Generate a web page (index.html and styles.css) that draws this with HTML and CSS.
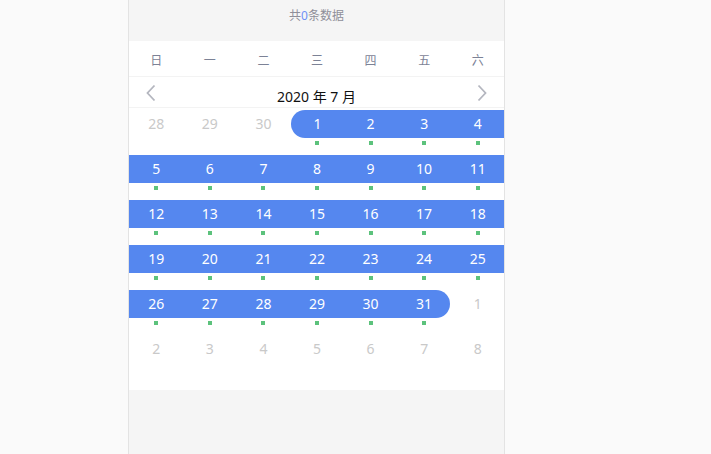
FILE: index.html
```html
<!DOCTYPE html>
<html lang="zh">
<head>
<meta charset="utf-8">
<link rel="stylesheet" href="styles.css">
</head>
<body>
<div class="phone">
  <div class="summary">共<span class="num">0</span>条数据</div>
  <div class="cal">
    <div class="weekdays">
      <span>日</span><span>一</span><span>二</span><span>三</span><span>四</span><span>五</span><span>六</span>
    </div>
    <div class="month">
      <svg class="arrow" width="10" height="18" viewBox="0 0 10 18"><path d="M8.5 1.5 L1.5 9 L8.5 16.5" fill="none" stroke="#b4b6bf" stroke-width="1.8"/></svg>
      <span class="title">2020 年 7 月</span>
      <svg class="arrow" width="10" height="18" viewBox="0 0 10 18"><path d="M1.5 1.5 L8.5 9 L1.5 16.5" fill="none" stroke="#b4b6bf" stroke-width="1.8"/></svg>
    </div>
    <div class="days">
      <div class="day other"><span class="bar">28</span></div>
      <div class="day other"><span class="bar">29</span></div>
      <div class="day other"><span class="bar">30</span></div>
      <div class="day sel start"><span class="bar">1</span><i></i></div>
      <div class="day sel"><span class="bar">2</span><i></i></div>
      <div class="day sel"><span class="bar">3</span><i></i></div>
      <div class="day sel"><span class="bar">4</span><i></i></div>
      <div class="day sel"><span class="bar">5</span><i></i></div>
      <div class="day sel"><span class="bar">6</span><i></i></div>
      <div class="day sel"><span class="bar">7</span><i></i></div>
      <div class="day sel"><span class="bar">8</span><i></i></div>
      <div class="day sel"><span class="bar">9</span><i></i></div>
      <div class="day sel"><span class="bar">10</span><i></i></div>
      <div class="day sel"><span class="bar">11</span><i></i></div>
      <div class="day sel"><span class="bar">12</span><i></i></div>
      <div class="day sel"><span class="bar">13</span><i></i></div>
      <div class="day sel"><span class="bar">14</span><i></i></div>
      <div class="day sel"><span class="bar">15</span><i></i></div>
      <div class="day sel"><span class="bar">16</span><i></i></div>
      <div class="day sel"><span class="bar">17</span><i></i></div>
      <div class="day sel"><span class="bar">18</span><i></i></div>
      <div class="day sel"><span class="bar">19</span><i></i></div>
      <div class="day sel"><span class="bar">20</span><i></i></div>
      <div class="day sel"><span class="bar">21</span><i></i></div>
      <div class="day sel"><span class="bar">22</span><i></i></div>
      <div class="day sel"><span class="bar">23</span><i></i></div>
      <div class="day sel"><span class="bar">24</span><i></i></div>
      <div class="day sel"><span class="bar">25</span><i></i></div>
      <div class="day sel"><span class="bar">26</span><i></i></div>
      <div class="day sel"><span class="bar">27</span><i></i></div>
      <div class="day sel"><span class="bar">28</span><i></i></div>
      <div class="day sel"><span class="bar">29</span><i></i></div>
      <div class="day sel"><span class="bar">30</span><i></i></div>
      <div class="day sel end"><span class="bar">31</span><i></i></div>
      <div class="day other"><span class="bar">1</span></div>
      <div class="day other"><span class="bar">2</span></div>
      <div class="day other"><span class="bar">3</span></div>
      <div class="day other"><span class="bar">4</span></div>
      <div class="day other"><span class="bar">5</span></div>
      <div class="day other"><span class="bar">6</span></div>
      <div class="day other"><span class="bar">7</span></div>
      <div class="day other"><span class="bar">8</span></div>
    </div>
  </div>
</div>
</body>
</html>
```

FILE: styles.css
```css
html, body {
  margin: 0;
  padding: 0;
  background: #fafafa;
  font-family: "Noto Sans", "Noto Sans CJK SC", sans-serif;
}
.phone {
  margin-left: 128px;
  width: 375px;
  height: 454px;
  background: #f5f5f5;
  border-left: 1px solid #e3e3e3;
  border-right: 1px solid #e3e3e3;
}
.summary {
  height: 41px;
  box-sizing: border-box;
  padding-top: 7px;
  text-align: center;
  font-size: 12px;
  line-height: 18px;
  color: #8f8f99;
}
.summary .num { color: #6f8ff5; }
.cal {
  background: #fff;
  padding-bottom: 12px;
}
.weekdays {
  display: grid;
  grid-template-columns: repeat(7, 1fr);
  height: 35px;
  align-items: center;
  border-bottom: 1px solid #f3f3f3;
  font-size: 12px;
  color: #7c8296;
  text-align: center;
}
.weekdays span { padding-top: 3px; padding-left: 1px; }
.month {
  height: 30px;
  display: flex;
  align-items: center;
  justify-content: space-between;
  padding: 0 17px;
  border-bottom: 1px solid #f3f3f3;
}
.month .arrow { margin-top: 2px; }
.month .title {
  font-size: 14px;
  color: #111;
  padding-top: 7px;
}
.days {
  display: grid;
  grid-template-columns: repeat(7, 1fr);
}
.day {
  height: 45px;
  padding-top: 2px;
  box-sizing: border-box;
  display: flex;
  flex-direction: column;
  align-items: center;
}
.bar {
  align-self: stretch;
  height: 28px;
  line-height: 28px;
  text-align: center;
  font-size: 14px;
  padding-left: 1px;
}
.other .bar { color: #c9c9c9; }
.sel .bar { background: #5587ef; color: #fff; }
.start .bar { border-radius: 14px 0 0 14px; margin-left: 1px; }
.end .bar { border-radius: 0 14px 14px 0; }
.day i {
  display: block;
  width: 4px;
  height: 4px;
  margin-top: 3px;
  margin-left: 1px;
  background: #5cc27c;
}
```
